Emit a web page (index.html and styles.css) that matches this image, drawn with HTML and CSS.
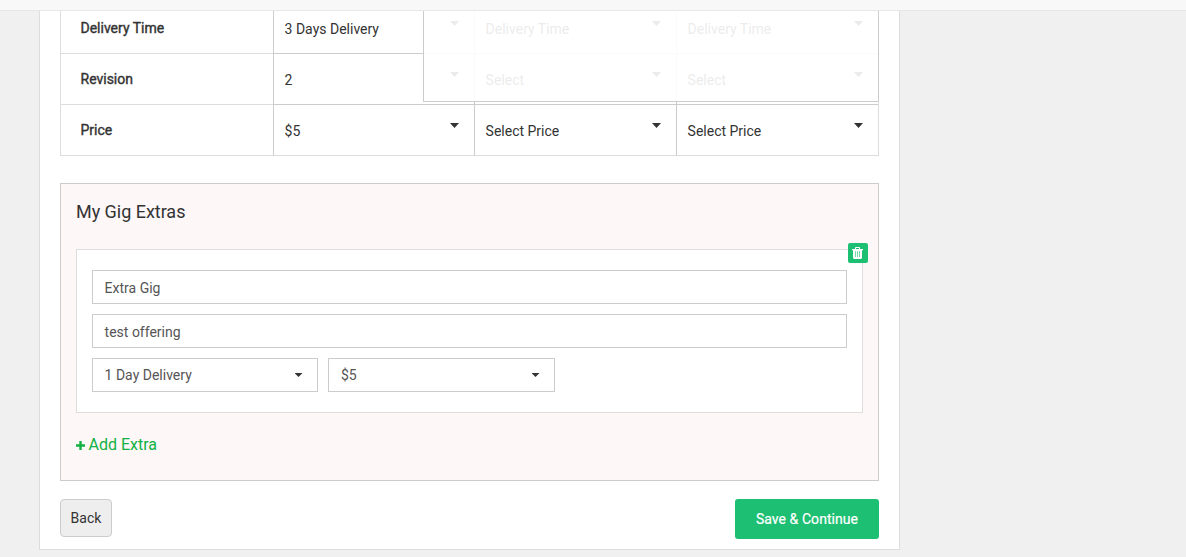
FILE: index.html
```html
<!DOCTYPE html>
<html lang="en">
<head>
<meta charset="utf-8">
<title>Gig Pricing</title>
<link rel="stylesheet" href="styles.css">
</head>
<body>
<header class="topbar"></header>
<main class="panel">
  <div class="packages">
    <div class="row">
      <div class="label">Delivery Time</div>
      <div class="cell"><span>3 Days Delivery</span><i class="caret"></i></div>
      <div class="cell"><span>Delivery Time</span><i class="caret"></i></div>
      <div class="cell"><span>Delivery Time</span><i class="caret"></i></div>
    </div>
    <div class="row">
      <div class="label">Revision</div>
      <div class="cell"><span>2</span><i class="caret"></i></div>
      <div class="cell"><span>Select</span><i class="caret"></i></div>
      <div class="cell"><span>Select</span><i class="caret"></i></div>
    </div>
    <div class="row">
      <div class="label">Price</div>
      <div class="cell"><span>$5</span><i class="caret"></i></div>
      <div class="cell"><span>Select Price</span><i class="caret"></i></div>
      <div class="cell"><span>Select Price</span><i class="caret"></i></div>
    </div>
    <div class="overlay"></div>
  </div>
  <section class="extras">
    <h2 class="title">My Gig Extras</h2>
    <div class="extra">
      <button class="delete" aria-label="Delete">
        <svg width="12" height="12" viewBox="0 0 12 12"><path d="M3 2V1q0-1 1-1h3q1 0 1 1v1H11v1.200h-1V10.500q0 1.500-1.500 1.500h-6Q1 12 1 10.500V3.200H0V2zM4 2h3V1H4z" fill="#fff"/><path d="M3.500 4.200v5.800M5.500 4.200v5.800M7.500 4.200v5.800" stroke="#1dbf73" stroke-width="1" opacity=".6"/></svg>
      </button>
      <div class="field">Extra Gig</div>
      <div class="field">test offering</div>
      <div class="selects">
        <div class="field select delivery"><span>1 Day Delivery</span><i class="caret small"></i></div>
        <div class="field select price"><span>$5</span><i class="caret small"></i></div>
      </div>
    </div>
    <a class="add"><svg class="plus" width="9" height="9" viewBox="0 0 9 9"><path d="M4.500 0v9M0 4.500h9" stroke="#11b143" stroke-width="2.400"/></svg>Add Extra</a>
  </section>
  <footer class="actions">
    <button class="back">Back</button>
    <button class="save">Save &amp; Continue</button>
  </footer>
</main>
</body>
</html>
```

FILE: styles.css
```css
* { box-sizing: border-box; }
body {
  margin: 0;
  height: 557px;
  overflow: hidden;
  background: #f0f0f0;
  color: #333;
  font: 14px/20px Roboto, sans-serif;
}
button { font: inherit; cursor: pointer; }
.topbar { height: 11px; background: #f8f8f8; border-bottom: 1px solid #e7e7e7; }
.panel {
  width: 861px;
  height: 539px;
  margin-left: 39px;
  padding: 0 20px;
  overflow: hidden;
  background: #fff;
  border: 1px solid #ddd;
  border-top: 0;
}
.packages {
  position: relative;
  margin-top: -8px;
  border: 1px solid #ddd;
  border-width: 0 1px;
}
.row { display: grid; grid-template-columns: 212px 201px 202px 202px; height: 51px; }
.label {
  padding: 15px 0 0 19.500px;
  border-bottom: 1px solid #ddd;
  -webkit-text-stroke: .4px #333;
}
.cell {
  display: flex;
  justify-content: space-between;
  padding: 16px 15px 0 10.600px;
  border-left: 1px solid #ccc;
  border-bottom: 1px solid #ccc;
}
.row:nth-child(3) .cell { border-bottom-color: #ddd; }
.caret {
  width: 9px;
  height: 5px;
  margin-top: 2px;
  background: #333;
  clip-path: polygon(0 0, 100% 0, 50% 100%);
}
.overlay {
  position: absolute;
  top: 0;
  right: -1px;
  width: 456px;
  height: 99px;
  background: rgba(255, 255, 255, .9);
  border: 1px solid #ccc;
  border-top: 0;
}
.extras {
  height: 298px;
  margin-top: 27px;
  padding: 17px 15px 0;
  background: #fdf7f7;
  border: 1px solid #ccc;
}
.title { margin: 0 0 27px; font-size: 18px; line-height: 21px; font-weight: 400; letter-spacing: -.03px; }
.extra {
  position: relative;
  display: flex;
  flex-direction: column;
  gap: 10px;
  height: 164px;
  padding: 20px 15px;
  background: #fff;
  border: 1px solid #ddd;
}
.field {
  height: 34px;
  padding: 7px 12px 5px 11.600px;
  border: 1px solid #ccc;
  color: #555;
  background: #fff;
}
.selects { display: flex; gap: 10px; }
.select { display: flex; justify-content: space-between; padding: 6px 14.500px 0 11.600px; }
.delivery { width: 226px; }
.price { width: 227px; padding-left: 12px; }
.small { width: 8px; height: 4px; margin-top: 8px; }
.delete {
  position: absolute;
  top: -7px;
  right: -6px;
  display: flex;
  align-items: center;
  justify-content: center;
  width: 20px;
  height: 20px;
  padding: 0;
  background: #1dbf73;
  border: 0;
  border-radius: 2px;
}
.add {
  display: flex;
  align-items: center;
  gap: 4px;
  margin: 22px 0 0 -.500px;
  color: #11b143;
  font-size: 16px;
  line-height: 20px;
}
.actions { display: flex; justify-content: space-between; align-items: flex-start; margin-top: 18px; }
.back {
  width: 52px;
  height: 38px;
  padding: 0;
  color: #333;
  background: #eee;
  border: 1px solid #ccc;
  border-radius: 4px;
}
.save {
  width: 144px;
  height: 40px;
  padding: 0;
  color: #fff;
  -webkit-text-stroke: .2px #fff;
  letter-spacing: .06px;
  background: #1dbf73;
  border: 0;
  border-radius: 3px;
}
```
